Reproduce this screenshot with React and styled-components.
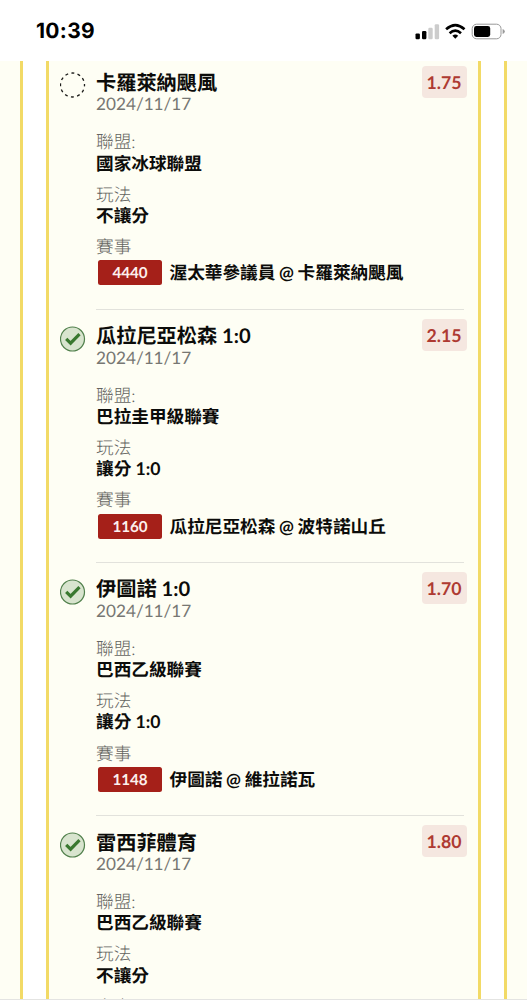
import React from "react";
import styled, { createGlobalStyle } from "styled-components";

const GlobalStyle = createGlobalStyle`
  *, *::before, *::after { box-sizing: border-box; }
  body {
    margin: 0;
    background: #fff;
    font-family: Lato, "Noto Sans CJK TC", sans-serif;
    text-rendering: geometricPrecision;
    -webkit-font-smoothing: antialiased;
  }
`;

const Screen = styled.div`
  display: flex;
  flex-direction: column;
  height: 1000px;
  overflow: hidden;
`;

const StatusBar = styled.header`
  flex: none;
  display: flex;
  align-items: center;
  justify-content: space-between;
  height: 61px;
  padding: 2px 21px 0 36px;
`;

const Clock = styled.span`
  font: 700 21px/24px Inter, sans-serif;
  letter-spacing: 0.3px;
  color: #000;
`;

const StatusIcons = styled.svg`
  display: block;
  width: 91px;
  height: 18px;
`;

const Outer = styled.main`
  flex: 1;
  min-height: 0;
  display: flex;
  padding: 0 20px;
  background: #fefef4;
  border-bottom: 1.5px solid #e4e4e2;
`;

const Frame = styled.div`
  flex: 1;
  min-width: 0;
  display: flex;
  padding: 0 23px;
  background: #fff;
  border: solid #f2da66;
  border-width: 0 3px;
`;

const Slip = styled.section`
  flex: 1;
  min-width: 0;
  padding: 0 14px 0 11px;
  overflow: hidden;
  background: #fefef4;
  border: solid #f2da66;
  border-width: 0 3px;
`;

const List = styled.div`
  margin-top: -4.6px;
`;

const Bet = styled.article`
  display: flex;
  height: 253.2px;
`;

const Mark = styled.div`
  flex: none;
  width: 36px;
  padding-top: 16px;
`;

const MarkIcon = styled.svg`
  display: block;
  width: 26px;
  height: 26px;
`;

const Body = styled.div`
  flex: 1;
  min-width: 0;
  border-bottom: 1.4px solid #e2e2dc;
`;

const Heading = styled.div`
  display: flex;
  justify-content: space-between;
  margin-right: -2.5px;
  padding-top: 9.5px;
  height: 56px;
`;

const Title = styled.h2`
  margin: 5.1px 0 -0.6px;
  font-size: 20.2px;
  font-weight: 700;
  line-height: 24px;
  white-space: nowrap;
  color: #0c0c0a;
`;

const DateText = styled.div`
  font-size: 17.2px;
  line-height: 19px;
  color: #777773;
`;

const Odds = styled.span`
  flex: none;
  width: 45px;
  height: 32px;
  border-radius: 4px;
  background: #f5e7e0;
  color: #ae3a32;
  font-size: 17.7px;
  font-weight: 700;
  line-height: 33px;
  text-align: center;
`;

const Details = styled.dl`
  display: flex;
  flex-direction: column;
  gap: 10px;
  margin: 19px 0 0;
  font-size: 17.65px;
  line-height: 21.2px;
`;

const Term = styled.dt`
  font-weight: 300;
  color: #646460;
`;

const Value = styled.dd`
  margin: 0;
  font-weight: 700;
  color: #0c0c0a;
`;

const Match = styled(Value)`
  display: flex;
  align-items: center;
  gap: 7.5px;
  height: 25px;
  margin: 3px 0 0 2px;
  white-space: nowrap;
  word-spacing: -0.6px;
`;

const Code = styled.span`
  width: 64px;
  height: 25px;
  border-radius: 2.5px;
  background: #a52019;
  color: #fdf0ee;
  font-size: 15.2px;
  line-height: 26.5px;
  text-align: center;
`;

const bets = [
  { title: "卡羅萊納颶風", odds: "1.75", league: "國家冰球聯盟", play: "不讓分", code: "4440", match: "渥太華參議員 @ 卡羅萊納颶風", won: false },
  { title: "瓜拉尼亞松森 1:0", odds: "2.15", league: "巴拉圭甲級聯賽", play: "讓分 1:0", code: "1160", match: "瓜拉尼亞松森 @ 波特諾山丘", won: true },
  { title: "伊圖諾 1:0", odds: "1.70", league: "巴西乙級聯賽", play: "讓分 1:0", code: "1148", match: "伊圖諾 @ 維拉諾瓦", won: true },
  { title: "雷西菲體育", odds: "1.80", league: "巴西乙級聯賽", play: "不讓分", code: "", match: "", won: true },
];

function BetMark({ won }) {
  return (
    <MarkIcon viewBox="0 0 26 26" fill="none">
      {won ? (
        <>
          <circle cx="12.5" cy="13" r="12" fill="#d8e4ce" stroke="#51804c" strokeWidth="1.2" />
          <path d="M6.2 12.9 10.6 17.2 19.5 8.2" stroke="#39782f" strokeWidth="3.2" />
        </>
      ) : (
        <circle cx="12.5" cy="13" r="12" stroke="#1c1c1a" strokeWidth="1.3" strokeDasharray="3 3.283" strokeDashoffset="1.5" />
      )}
    </MarkIcon>
  );
}

function BetItem({ bet }) {
  return (
    <Bet>
      <Mark><BetMark won={bet.won} /></Mark>
      <Body>
        <Heading>
          <div>
            <Title>{bet.title}</Title>
            <DateText>2024/11/17</DateText>
          </div>
          <Odds>{bet.odds}</Odds>
        </Heading>
        <Details>
          <div><Term>聯盟:</Term><Value>{bet.league}</Value></div>
          <div><Term>玩法</Term><Value>{bet.play}</Value></div>
          <div>
            <Term>賽事</Term>
            {bet.code && <Match><Code>{bet.code}</Code>{bet.match}</Match>}
          </div>
        </Details>
      </Body>
    </Bet>
  );
}

export default function App() {
  return (
    <>
      <GlobalStyle />
      <Screen>
        <StatusBar>
          <Clock>10:39</Clock>
          <StatusIcons viewBox="0 0 91 18">
            <rect x="0.5" y="10.4" width="4.4" height="5.8" rx="1.2" />
            <rect x="7" y="8" width="4.4" height="8.2" rx="1.2" />
            <rect x="13.3" y="4.7" width="4.4" height="11.5" rx="1.2" fill="#ccc" />
            <rect x="19.7" y="1.2" width="4.4" height="15" rx="1.2" fill="#ccc" />
            <g fill="none" stroke="#000" strokeWidth="2.7">
              <path d="M31.1 6.3Q40.3-1.9 49.5 6.3" />
              <path d="M34.6 10.2Q40.3 5.2 46 10.2" />
            </g>
            <path d="M37.4 12.7Q40.3 10.5 43.2 12.7L40.3 15.8Z" />
            <rect x="57.2" y="1.2" width="28.8" height="14.6" rx="4.4" fill="none" stroke="#999" />
            <rect x="59" y="3" width="16.2" height="11" rx="2.4" />
            <path d="M87.6 6.1Q89.8 6.8 89.8 8.5T87.6 10.9Z" fill="#999" />
          </StatusIcons>
        </StatusBar>
        <Outer>
          <Frame>
            <Slip>
              <List>
                {bets.map((bet) => <BetItem key={bet.title} bet={bet} />)}
              </List>
            </Slip>
          </Frame>
        </Outer>
      </Screen>
    </>
  );
}
